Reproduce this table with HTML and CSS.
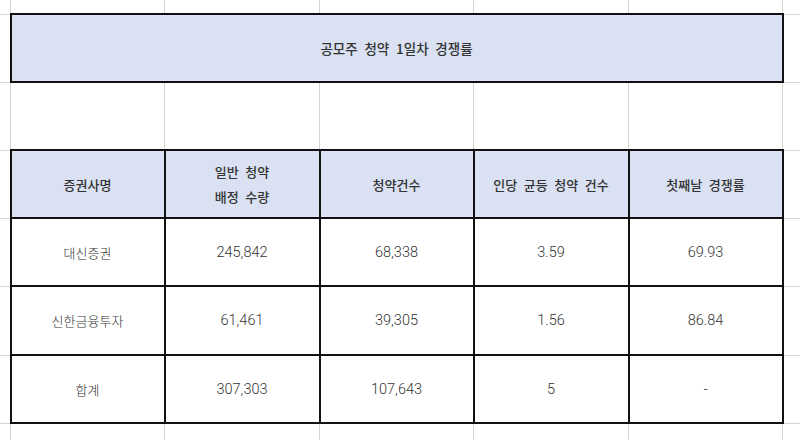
FILE: index.html
```html
<!DOCTYPE html>
<html lang="ko">
<head>
<meta charset="utf-8">
<title>공모주 청약 1일차 경쟁률</title>
<link rel="stylesheet" href="styles.css">
</head>
<body>
<table class="sheet">
  <colgroup>
    <col class="c-edge-l">
    <col class="c-a">
    <col class="c-b">
    <col class="c-a">
    <col class="c-b">
    <col class="c-a">
    <col class="c-edge-r">
  </colgroup>
  <tr class="r-top">
    <td></td><td></td><td></td><td></td><td></td><td></td><td></td>
  </tr>
  <tr class="r-row">
    <td></td>
    <td class="box head title" colspan="5">공모주 청약 1일차 경쟁률</td>
    <td></td>
  </tr>
  <tr class="r-row">
    <td></td><td></td><td></td><td></td><td></td><td></td><td></td>
  </tr>
  <tr class="r-row">
    <td></td>
    <td class="box head">증권사명</td>
    <td class="box head two">일반 청약<br>배정 수량</td>
    <td class="box head">청약건수</td>
    <td class="box head">인당 균등 청약 건수</td>
    <td class="box head">첫째날 경쟁률</td>
    <td></td>
  </tr>
  <tr class="r-row">
    <td></td>
    <td class="box ko">대신증권</td>
    <td class="box num">245,842</td>
    <td class="box num">68,338</td>
    <td class="box num">3.59</td>
    <td class="box num">69.93</td>
    <td></td>
  </tr>
  <tr class="r-row r-tall">
    <td></td>
    <td class="box ko">신한금융투자</td>
    <td class="box num">61,461</td>
    <td class="box num">39,305</td>
    <td class="box num">1.56</td>
    <td class="box num">86.84</td>
    <td></td>
  </tr>
  <tr class="r-row">
    <td></td>
    <td class="box ko">합계</td>
    <td class="box num">307,303</td>
    <td class="box num">107,643</td>
    <td class="box num">5</td>
    <td class="box num">-</td>
    <td></td>
  </tr>
  <tr class="r-bottom">
    <td></td><td></td><td></td><td></td><td></td><td></td><td></td>
  </tr>
</table>
</body>
</html>
```
FILE: styles.css
```css
html, body {
  margin: 0;
  padding: 0;
  background: #ffffff;
  overflow: hidden;
}

body {
  width: 800px;
  height: 440px;
  font-family: "Noto Sans CJK KR", "Liberation Sans", sans-serif;
}

.sheet {
  border-collapse: collapse;
  table-layout: fixed;
  width: 818px;
  margin-top: -1px;
  margin-left: -1px;
}

.c-edge-l { width: 11px; }
.c-a { width: 154px; }
.c-b { width: 155px; }
.c-edge-r { width: 36px; }

.sheet td {
  border: 1px solid #d4d4d4;
  padding: 0;
  text-align: center;
  vertical-align: middle;
  color: #333333;
}

.r-top td { height: 13px; }
.r-row td { height: 66px; }
.r-tall td { height: 67px; }
.r-bottom td { height: 30px; }

.sheet td.box {
  border: 2px solid #111111;
}

.head {
  background: #d9e1f2;
  font-size: 13px;
  font-weight: 500;
  color: #1e1e1e;
  line-height: 25px;
  word-spacing: 3px;
}

.title {
  font-size: 13.5px;
}

.ko {
  font-size: 13px;
  font-weight: 300;
  color: #444444;
}

.num {
  font-family: "Roboto", "Liberation Sans", sans-serif;
  font-size: 14.5px;
  font-weight: 300;
  color: #333333;
}
```
